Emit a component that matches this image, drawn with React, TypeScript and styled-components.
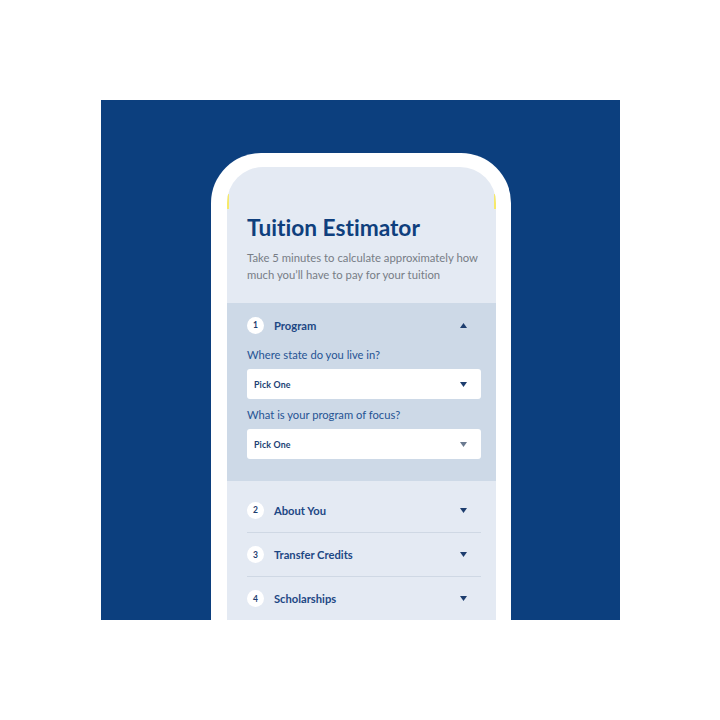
import React from 'react'
import styled, { createGlobalStyle } from 'styled-components'

const GlobalStyle = createGlobalStyle`
	html, body {
		margin: 0;
		padding: 0;
		background: #ffffff;
	}
	body {
		font-family: 'Lato', 'Inter', 'Liberation Sans', sans-serif;
		font-variant-ligatures: none;
	}
`

const Page = styled.div`
	width: 720px;
	height: 720px;
	padding: 100px 0 0 101px;
	box-sizing: border-box;
`

const Backdrop = styled.div`
	width: 519px;
	height: 520px;
	background: #0c3f7e;
	overflow: hidden;
	padding: 53px 0 0 110px;
	box-sizing: border-box;
`

const Phone = styled.div`
	width: 300px;
	height: 480px;
	background: #ffffff;
	border-radius: 50px 50px 0 0;
	padding: 14px 14px 0 16px;
	box-sizing: border-box;
`

const Screen = styled.div`
	position: relative;
	width: 269px;
	height: 100%;
	background: #e4eaf3;
	border-radius: 36px 36px 0 0;
	overflow: hidden;
`

const Notch = styled.span<{ $side: 'left' | 'right' }>`
	position: absolute;
	top: 27px;
	${(p) => p.$side}: 0;
	width: 2px;
	height: 15px;
	background: #f6e96a;
`

const Header = styled.header`
	height: 136px;
	box-sizing: border-box;
	padding: 48px 16px 0 20px;
`

const Title = styled.h1`
	margin: 0;
	font-family: 'Lato', sans-serif;
	font-size: 22.7px;
	font-weight: 700;
	color: #0f3f7d;
	line-height: 26px;
`

const Intro = styled.p`
	margin: 9px 0 0;
	font-size: 11.3px;
	line-height: 16.5px;
	color: #777d86;
`

const Open = styled.section`
	background: #cdd9e7;
	padding: 13px 15px 22px 20px;
`

const StepHead = styled.div`
	display: flex;
	align-items: center;
	height: 18px;
`

const Badge = styled.span`
	display: flex;
	align-items: center;
	justify-content: center;
	width: 17px;
	height: 17px;
	border-radius: 50%;
	background: #ffffff;
	font-size: 8.5px;
	font-weight: 700;
	color: #1d3d6e;
	margin-right: 10px;
`

const StepName = styled.span`
	flex: 1;
	font-size: 11.2px;
	font-weight: 700;
	color: #1c4784;
`

const Caret = styled.svg<{ $light?: boolean }>`
	width: 7px;
	height: 5px;
	margin-right: 14px;
	fill: ${(p) => (p.$light ? '#6b7a90' : '#1d3d6e')};
`

const Question = styled.div<{ $gap: number }>`
	margin: ${(p) => p.$gap}px 0 7px;
	font-size: 11.2px;
	line-height: 14px;
	color: #265494;
`

const Select = styled.div`
	display: flex;
	align-items: center;
	height: 30px;
	background: #ffffff;
	border-radius: 3px;
	padding-left: 7px;
`

const SelectText = styled.span`
	flex: 1;
	font-size: 8.8px;
	letter-spacing: 0.15px;
	font-weight: 700;
	color: #1c3f74;
`

const Steps = styled.div`
	padding: 0 15px 0 20px;
`

const Row = styled.div`
	display: flex;
	align-items: center;
	box-sizing: border-box;
	height: 44px;
	border-top: 1px solid #cfd8e4;
	&:first-child {
		border-top: none;
		height: 51px;
		padding-top: 7px;
	}
`

function Arrow({ up = false, light = false }: { up?: boolean; light?: boolean }) {
	return (
		<Caret viewBox="0 0 7 5" $light={light}>
			{up ? <polygon points="3.5,0 7,5 0,5" /> : <polygon points="0,0 7,0 3.5,5" />}
		</Caret>
	)
}

const closedSteps = [
	{ n: 2, name: 'About You' },
	{ n: 3, name: 'Transfer Credits' },
	{ n: 4, name: 'Scholarships' },
]

export default function App() {
	return (
		<Page>
			<GlobalStyle />
			<Backdrop>
				<Phone>
					<Screen>
						<Notch $side="left" />
						<Notch $side="right" />
						<Header>
							<Title>Tuition Estimator</Title>
							<Intro>Take 5 minutes to calculate approximately how much you’ll have to pay for your tuition</Intro>
						</Header>
						<Open>
							<StepHead>
								<Badge>1</Badge>
								<StepName>Program</StepName>
								<Arrow up />
							</StepHead>
							<Question $gap={14}>Where state do you live in?</Question>
							<Select>
								<SelectText>Pick One</SelectText>
								<Arrow />
							</Select>
							<Question $gap={9}>What is your program of focus?</Question>
							<Select>
								<SelectText>Pick One</SelectText>
								<Arrow light />
							</Select>
						</Open>
						<Steps>
							{closedSteps.map((s) => (
								<Row key={s.n}>
									<Badge>{s.n}</Badge>
									<StepName>{s.name}</StepName>
									<Arrow />
								</Row>
							))}
						</Steps>
					</Screen>
				</Phone>
			</Backdrop>
		</Page>
	)
}
